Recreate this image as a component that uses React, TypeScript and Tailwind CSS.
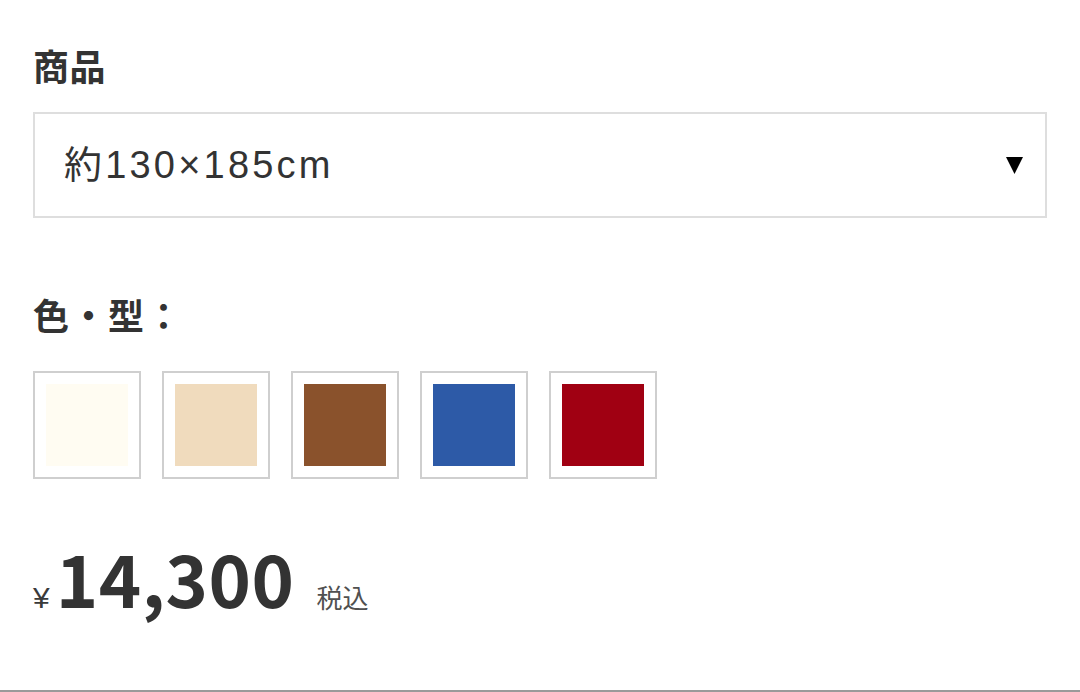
const COLORS = ["#fffcf2", "#f0dbbd", "#8a522c", "#2d5aa7", "#a00012"];

export default function App() {
  return (
    <div
      className="w-[1080px] h-[692px] bg-white text-[#333] border-b-2 border-[#9a9a9a] overflow-hidden"
      style={{ fontFamily: '"Noto Sans CJK JP", "Noto Sans", sans-serif' }}
    >
      <div className="pl-[33px] pr-[33px] pt-[47px]">
        {/* 商品 */}
        <h2 className="text-[36px] font-bold leading-none tracking-[0.5px]">商品</h2>

        <div className="mt-[29px] h-[106px] border-2 border-[#dedede] flex items-center justify-between pl-[29px] pr-[22px]">
          <span
            className="text-[38px] leading-none tracking-[3.2px] text-[#333]"
            style={{ fontFamily: '"Liberation Sans", "Noto Sans CJK JP", sans-serif' }}
          >
            約130×185cm
          </span>
          <svg width="17" height="17" viewBox="0 0 17 17">
            <polygon points="0,0 17,0 8.5,17" fill="#000" />
          </svg>
        </div>

        {/* 色・型 */}
        <h2 className="mt-[78px] text-[36px] font-bold leading-none tracking-[1.5px]">色・型：</h2>

        <div className="mt-[39px] flex gap-[21px]">
          {COLORS.map((c) => (
            <div key={c} className="w-[108px] h-[108px] border-2 border-[#cfcfcf] p-[11px]">
              <div className="w-full h-full" style={{ backgroundColor: c }} />
            </div>
          ))}
        </div>

        {/* price */}
        <div className="mt-[62px] flex items-baseline">
          <span
            className="text-[30px] leading-none text-[#3a3a3a]"
            style={{ fontFamily: '"Liberation Sans", sans-serif' }}
          >
            ¥
          </span>
          <span className="ml-[6px] text-[72px] font-bold leading-none tracking-[0.5px]">14,300</span>
          <span className="ml-[22px] text-[26px] leading-none text-[#505050]">税込</span>
        </div>
      </div>
    </div>
  );
}
